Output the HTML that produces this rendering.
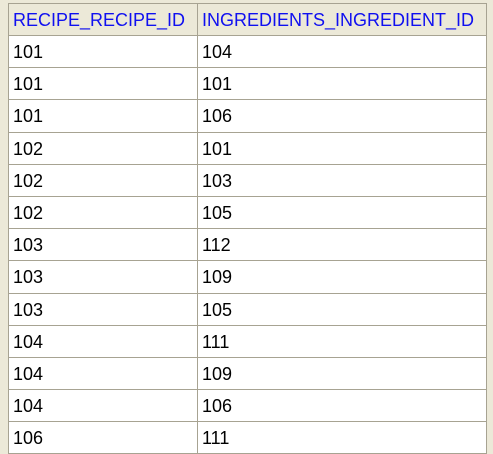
<!DOCTYPE html>
<html><head><style>
html,body{margin:0;padding:0;background:#ECE9D8;width:493px;height:445px;overflow:hidden;font-family:"Liberation Sans",Arial,sans-serif;font-size:18px;}
table{position:absolute;left:8px;top:3px;border-collapse:collapse;width:479px;table-layout:fixed;}
td,th{border:1px solid #A7A392;padding:2px 0 0 4px;text-align:left;font-weight:normal;box-sizing:border-box;white-space:nowrap;overflow:hidden;}
th{color:#1010F0;background:#ECE9D8;height:32px;}
td{background:#fff;color:#000;height:32.2px;}
.c1{width:189px;}
</style></head><body>
<table>
<tr><th class="c1">RECIPE_RECIPE_ID</th><th>INGREDIENTS_INGREDIENT_ID</th></tr>
<tr><td>101</td><td>104</td></tr>
<tr><td>101</td><td>101</td></tr>
<tr><td>101</td><td>106</td></tr>
<tr><td>102</td><td>101</td></tr>
<tr><td>102</td><td>103</td></tr>
<tr><td>102</td><td>105</td></tr>
<tr><td>103</td><td>112</td></tr>
<tr><td>103</td><td>109</td></tr>
<tr><td>103</td><td>105</td></tr>
<tr><td>104</td><td>111</td></tr>
<tr><td>104</td><td>109</td></tr>
<tr><td>104</td><td>106</td></tr>
<tr><td>106</td><td>111</td></tr>
</table>
</body></html>
